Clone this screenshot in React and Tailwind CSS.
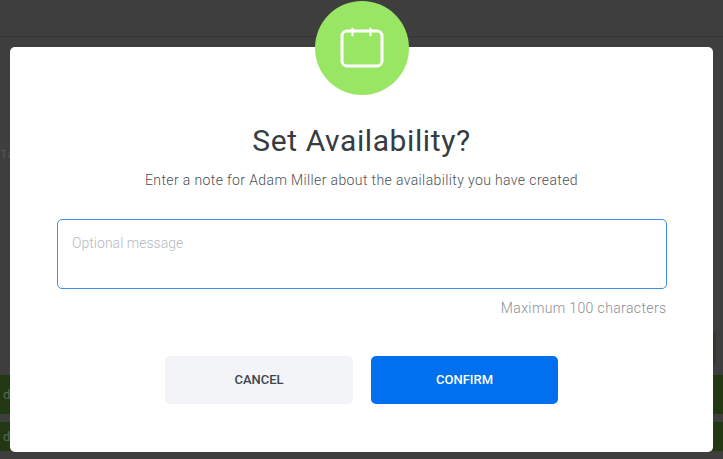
export default function App() {
  const font = { fontFamily: 'Roboto, "Liberation Sans", sans-serif' };
  return (
    <div className="relative h-[459px] w-[723px] overflow-hidden bg-[#3e3e3e]" style={font}>
      {/* dimmed page behind the dialog */}
      <div className="h-[37px] border-b border-[#353535]" />
      <div className="pt-[109px] text-[13px] leading-4 text-[#555555]">1a</div>
      <div className="absolute left-[712px] top-[332px] h-[34px] w-[4px] rounded-r bg-[#2d3a27]" />
      <div className="absolute inset-x-0 top-[375px] flex flex-col gap-2">
        <div className="flex h-[39px] items-center bg-[#213812] pl-[3px] text-[13px] text-[#5a6a50]">d</div>
        <div className="flex h-[29px] items-center bg-[#213812] pl-[3px] text-[13px] text-[#5a6a50]">d</div>
      </div>

      {/* dialog */}
      <div className="absolute left-[10px] top-[47px] flex h-[405px] w-[703px] flex-col items-center rounded-[5px] bg-white px-[47px] pt-[76px]">
        <h2 className="text-[30px] font-normal leading-[36px] tracking-[0.6px] text-[#363c42]">Set Availability?</h2>
        <p className="mt-[11px] text-[14px] font-light leading-5 tracking-[0.38px] text-[#4a5056]">
          Enter a note for Adam Miller about the availability you have created
        </p>
        <div className="mt-[29px] h-[70px] w-[610px] rounded-[5px] border border-[#3b8fee] px-[14.5px] pt-[13px] text-[14px] font-light leading-5 tracking-[0.03px] text-[#b4bac0]">
          Optional message
        </div>
        <div className="mt-[9px] w-[610px] text-right text-[14px] font-light leading-5 tracking-[0.38px] text-[#8a8f94]">
          Maximum 100 characters
        </div>
        <div className="mt-[38px] flex gap-[18px]">
          <button className="h-[48px] w-[188px] rounded-[5px] bg-[#f2f4f8] text-[13px] font-medium text-[#3f454b]">
            CANCEL
          </button>
          <button className="h-[48px] w-[187px] rounded-[5px] bg-[#0070ee] text-[13px] font-medium text-white">
            CONFIRM
          </button>
        </div>
      </div>

      {/* icon badge over the dialog edge */}
      <div className="absolute left-[315px] top-[1px] flex h-[94px] w-[94px] items-center justify-center rounded-full bg-[#99e665]">
        <svg width="44" height="42" viewBox="0 0 44 42" fill="none" stroke="white" strokeWidth="3" strokeLinecap="round">
          <rect x="2" y="4" width="40" height="35" rx="5" />
          <path d="M12.5 1.5v7M30.5 1.5v7" strokeWidth="2" />
        </svg>
      </div>
    </div>
  );
}
